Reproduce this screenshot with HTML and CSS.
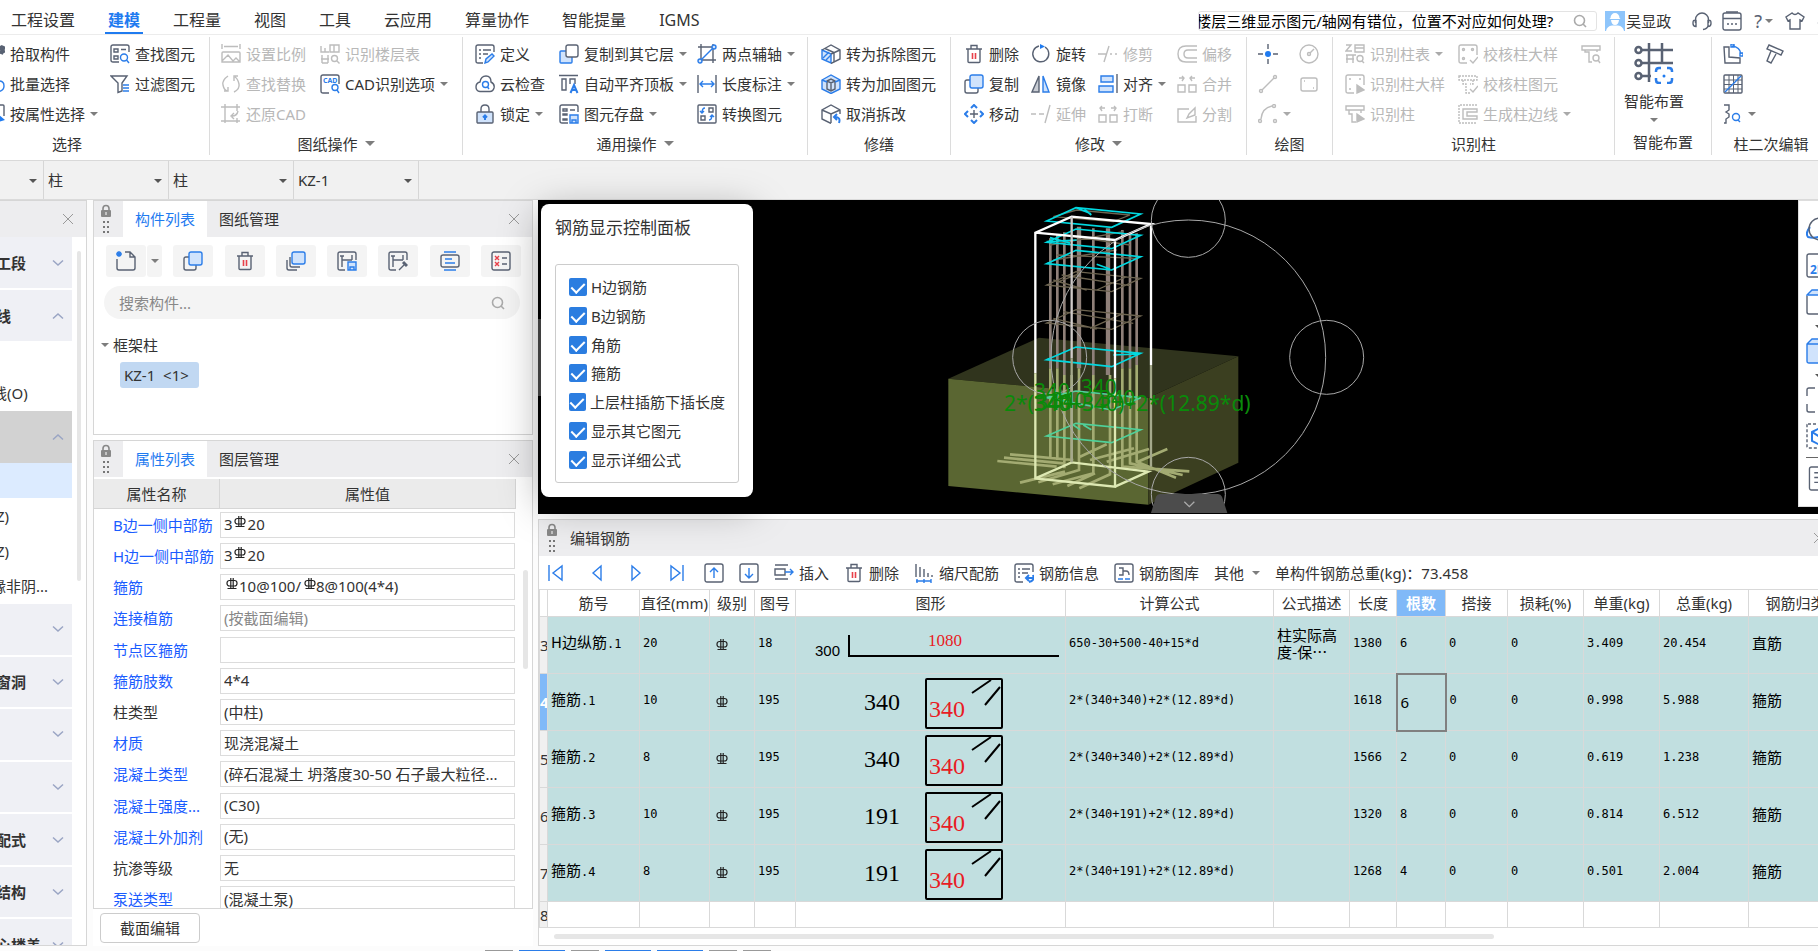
FILE: index.html
```html
<!DOCTYPE html>
<html lang="zh-CN">
<head>
    <meta charset="UTF-8">
    <title>建模</title>
    <link rel="stylesheet" href="styles.css">
</head>
<body>
    <!-- shared symbols -->
    <svg class="sprite">
        <symbol id="lock" viewBox="0 0 12 30">
            <path d="M3 7V4.500a3 3 0 0 1 6 0V7" fill="none" stroke="#888" stroke-width="1.600"/>
            <rect x="1" y="6" width="10" height="7" rx="1" fill="#888"/>
            <path d="M6 8v3" stroke="#fff"/>
            <path d="M3 17h2v2H3zM7 17h2v2H7zM3 22h2v2H3zM7 22h2v2H7zM3 27h2v2H3zM7 27h2v2H7z" fill="#777"/>
        </symbol>
        <symbol id="cross" viewBox="0 0 12 12"><path d="M1 1l10 10M11 1L1 11"/></symbol>
        <symbol id="down" viewBox="0 0 12 12"><path d="M1 3.500l5 4.500 5-4.500"/></symbol>
        <symbol id="up" viewBox="0 0 12 12"><path d="M1 8.500L6 4l5 4.500"/></symbol>
        <symbol id="lens" viewBox="0 0 14 14"><circle cx="6.500" cy="6.500" r="5"/><path d="M10 10l3 3"/></symbol>
        <symbol id="trash" viewBox="0 0 20 20">
            <path d="M2 5h16M7 5V1.500h6V5M4 5v12.500q0 1 1 1h10q1 0 1-1V5"/>
            <path d="M8.500 9v6M11.500 9v6" stroke="#e8404a" stroke-width="1.600"/>
        </symbol>
        <symbol id="rebar" viewBox="0 0 12 12">
            <rect x="1" y="2.500" width="10" height="5.500" rx="2.500"/>
            <path d="M4.800 0v10.500M7.200 0v10.500M1.500 10.500h9"/>
        </symbol>
        <symbol id="stirrup" viewBox="0 0 140 57">
            <rect x="62" y="5" width="76" height="49" rx="1"/>
            <path d="M108 19l19-13M121 31l15-18"/>
        </symbol>
    </svg>

    <header class="menubar">
        <nav class="menu">
            <a href="#">工程设置</a>
            <a href="#" class="active">建模</a>
            <a href="#">工程量</a>
            <a href="#">视图</a>
            <a href="#">工具</a>
            <a href="#">云应用</a>
            <a href="#">算量协作</a>
            <a href="#">智能提量</a>
            <a href="#">IGMS</a>
        </nav>
        <div class="account">
            <div class="help-search">
                <input type="text" aria-label="搜索" value="楼层三维显示图元/轴网有错位，位置不对应如何处理?">
                <svg class="lens"><use href="#lens"/></svg>
            </div>
            <svg class="avatar" viewBox="0 0 20 20">
                <rect width="20" height="20" fill="#8ec5fb"/>
                <path d="M5.500 7a4.500 5 0 0 1 9 0l1 1H4.500zM6 9h8q-.5 5-4 5t-4-5zM1 20q1-5 6-5.500h6q5 .5 6 5.500z" fill="#fff"/>
            </svg>
            <span class="user">吴显政</span>
            <svg class="ic headset" viewBox="0 0 20 20"><path d="M3.500 12V8.500a6.500 6.500 0 0 1 13 0V12M4 9.500H2q-1 0-1 3t3 3zM16 9.500h2q1 0 1 3t-3 3zM16 15q-1 3-5 3.500"/></svg>
            <svg class="ic" viewBox="0 0 20 20"><rect x="1" y="2" width="18" height="17" rx="2"/><path d="M1 7.500h18M4 1h12M5 13h2M9 13h2M13 13h2"/></svg>
            <button class="help">?<i class="caret"></i></button>
            <svg class="ic shirt" viewBox="0 0 20 20"><path d="M7 2L1 6l2 4 2-1v9h10V9l2 1 2-4-6-4q-3 3-6 0z"/></svg>
            <svg class="ic tiny"><use href="#up"/></svg>
        </div>
    </header>

    <section class="ribbon">
        <div class="group g-select">
            <div class="tools">
                <button><svg class="ic" viewBox="0 0 20 20"><path d="M15 2l4 7M19 2l-3 8" stroke-width="4"/></svg>拾取构件</button>
                <button><svg class="ic" viewBox="0 0 20 20"><path d="M9 18H3q-2 0-2-2V3q0-2 2-2h14q2 0 2 2v5M4 5h4v3H4zM11 5.500h5M4 12h4v3H4z"/><g class="b"><circle cx="14" cy="13.500" r="3.500"/><path d="M16.500 16l2.500 3"/></g></svg>查找图元</button>
                <button><svg class="ic b" viewBox="0 0 20 20"><path d="M14 3v8M14 7q5 0 5 5t-7 6"/></svg>批量选择</button>
                <button><svg class="ic" viewBox="0 0 20 20"><path d="M1 2h16l-5 7v8l-4 1.500V9z"/><path class="b" d="M13 11h6M13 14h6M13 17h6"/></svg>过滤图元</button>
                <button><svg class="ic" viewBox="0 0 20 20"><path d="M14 1h4q1 0 1 1v10"/><path class="bf" d="M13 10l7 6-7 2z"/></svg>按属性选择<i class="caret"></i></button>
            </div>
            <div class="group-name">选择</div>
        </div>

        <div class="group g-drawing">
            <div class="tools">
                <button disabled><svg class="ic" viewBox="0 0 20 20"><path d="M1 0v5M19 0v5M3 2.500h14M1 18V9q0-1 1-1h16q1 0 1 1v9zM1 17l6-6 5 6 3-3 4 4"/></svg>设置比例</button>
                <button disabled><svg class="ic" viewBox="0 0 20 20"><path d="M1 2v6h8M5 8V4M10 1h9v7h-9zM14 1v7M2 11v8M8 11v8M1 15h8M2 19h6"/><circle cx="14.500" cy="14.500" r="3"/><path d="M17 17l2.500 2.500"/></svg>识别楼层表</button>
                <button disabled><svg class="ic" viewBox="0 0 20 20"><path d="M7 2Q1 6 2 11t4 6M3 17h4v-4M13 18q6-3 5-8t-4-7M17 2h-4v5"/></svg>查找替换</button>
                <button><svg class="ic" viewBox="0 0 20 20"><path d="M9 19H3q-2 0-2-2V3q0-2 2-2h14q2 0 2 2v7"/><text class="cad" x="3" y="9">CAD</text><g class="b"><circle cx="15" cy="13.500" r="3"/><path d="M17 16l2 3"/></g></svg>CAD识别选项<i class="caret"></i></button>
                <button disabled><svg class="ic" viewBox="0 0 20 20"><path d="M4 0v19M0 3h19M16 0v7M0 17h19M16 14v5M17 7q-1 5-6 5M13 9l-3 3 3 3"/></svg>还原CAD</button>
            </div>
            <div class="group-name">图纸操作<i class="caret big"></i></div>
        </div>

        <div class="group g-common">
            <div class="tools">
                <button><svg class="ic" viewBox="0 0 20 20"><path d="M8 19H3q-2 0-2-2V3q0-2 2-2h14q2 0 2 2v5M4 6h2M8 6h8M4 10h2M8 10h5M4 14h2"/><path class="bl" d="M10 19l1-4 6-5 2 2-6 6z"/></svg>定义</button>
                <button><svg class="ic" viewBox="0 0 20 20"><rect class="bl" x="1" y="7" width="12" height="12" rx="1"/><rect x="7" y="1" width="12" height="12" rx="2" fill="#fff"/></svg>复制到其它层<i class="caret"></i></button>
                <button><svg class="ic" viewBox="0 0 20 20"><path d="M4 0v19M16 0v19M1 3h18M1 16h18"/><path class="b" d="M2 18L18 2"/><circle class="bl" cx="3" cy="17" r="2"/><circle class="bl" cx="17" cy="3" r="2"/></svg>两点辅轴<i class="caret"></i></button>
                <button><svg class="ic" viewBox="0 0 20 20"><path d="M5 17.500Q1 17 1 13t4-5q1-6 6-6t5 6q4 2 3 6-1 3.500-4 3.500z"/><g class="b"><circle cx="10.500" cy="10.500" r="3"/><path d="M12.500 13l1.500 2"/></g></svg>云检查</button>
                <button><svg class="ic" viewBox="0 0 20 20"><path d="M0 1.500h19M3 5h4v11H3zM11 10V5h5v5"/><path class="b" d="M11.500 19l3.500-8 3.500 8M13 16h4" stroke-width="2"/></svg>自动平齐顶板<i class="caret"></i></button>
                <button><svg class="ic" viewBox="0 0 20 20"><path d="M1 1v18M19 1v18"/><path class="b" d="M3 10h14M6 7l-3 3 3 3M14 7l3 3-3 3"/></svg>长度标注<i class="caret"></i></button>
                <button><svg class="ic" viewBox="0 0 20 20"><path d="M6 8V5q0-4 4-4t4 4v3"/><rect x="2" y="8" width="16" height="11" rx="1" fill="#d0e3fc"/><path class="b" d="M10 16v-4M8 13.500l2-2 2 2" stroke-width="2"/></svg>锁定<i class="caret"></i></button>
                <button><svg class="ic" viewBox="0 0 20 20"><path d="M9 19H3q-2 0-2-2V3q0-2 2-2h14q2 0 2 2v5M4 5h4v2H4zM11 6h5M4 10h4v1H4zM4 15h4v1H4z"/><path class="bl" d="M11 11h8v8h-8zM13 19v-3h4v3"/></svg>图元存盘<i class="caret"></i></button>
                <button><svg class="ic" viewBox="0 0 20 20"><rect x="1" y="1" width="18" height="18" rx="1"/><path d="M12 4h4v4h-4zM4 12h4v4H4z"/><path class="b" d="M8 4Q5 4 5 9M3 7l2 2 2-2M12 16q3 0 3-5M13 13l2-2 2 2"/></svg>转换图元</button>
            </div>
            <div class="group-name">通用操作<i class="caret big"></i></div>
        </div>

        <div class="group g-repair">
            <div class="tools">
                <button><svg class="ic" viewBox="0 0 20 20"><path class="bl" d="M1 6l9 4v9l-9-4z"/><path d="M1 6l9-5 9 5v9l-9 4.500M10 10l9-4M4 4.500l9 4v9"/><path class="b" d="M2 14l6-6M5 16l5-5"/></svg>转为拆除图元</button>
                <button><svg class="ic" viewBox="0 0 20 20"><path class="bl" d="M1 6l9-5 9 5v9l-9 4.500L1 15z"/><path d="M6 7l4-2 4 2v8l-4 2-4-2zM6 7l4 2 4-2M10 9v8"/><path class="b" d="M1 6l5 2M19 6l-5 2"/></svg>转为加固图元</button>
                <button><svg class="ic" viewBox="0 0 20 20"><path d="M10 19.500L1 15V6l9-5 9 5v4M1 6l9 4 9-4M10 10v9"/><path class="b" d="M18 19q2-6-4-6M16 10l-3 3 3 3" stroke-width="2"/></svg>取消拆改</button>
            </div>
            <div class="group-name">修缮</div>
        </div>

        <div class="group g-modify">
            <div class="tools">
                <button><svg class="ic"><use href="#trash"/></svg>删除</button>
                <button><svg class="ic" viewBox="0 0 20 20"><path d="M14 3a8 8 0 1 1-6-1"/><path class="bf" d="M9 0l5 2.500L9 5z"/></svg>旋转</button>
                <button disabled><svg class="ic" viewBox="0 0 20 20"><path d="M0 10h9M11 2L6 18M12 10h2M17 10h2"/></svg>修剪</button>
                <button disabled><svg class="ic" viewBox="0 0 20 20"><path d="M20 2H9Q1 2 1 10t8 8h11M20 6h-9q-4 0-4 4t4 4h9"/></svg>偏移</button>
                <button><svg class="ic" viewBox="0 0 20 20"><path d="M6 6H3q-2 0-2 2v9q0 2 2 2h9q2 0 2-2v-3"/><rect class="bl" x="6" y="1" width="13" height="13" rx="2"/></svg>复制</button>
                <button><svg class="ic" viewBox="0 0 20 20"><path d="M8 2v16H1z" fill="#c9cdd4"/><path class="bl" d="M12 2v16h6z"/></svg>镜像</button>
                <button><svg class="ic" viewBox="0 0 20 20"><path d="M19 0v19"/><path class="bl" d="M3 2h12v6H3zM1 12h14v6H1z"/></svg>对齐<i class="caret"></i></button>
                <button disabled><svg class="ic" viewBox="0 0 20 20"><path d="M1 11h7v7H1zM12 11h7v7h-7zM2 4h5M5 2l2 2-2 3M18 4h-5M15 2l-2 2 2 3"/></svg>合并</button>
                <button><svg class="ic" viewBox="0 0 20 20"><path d="M10 6v8M6 10h8"/><path class="b" d="M7 4l3-3 3 3M7 16l3 3 3-3M4 7l-3 3 3 3M16 7l3 3-3 3" stroke-width="2"/></svg>移动</button>
                <button disabled><svg class="ic" viewBox="0 0 20 20"><path d="M0 10h5M8 10h5M19 1l-5 18"/></svg>延伸</button>
                <button disabled><svg class="ic" viewBox="0 0 20 20"><path d="M1 11h7v7H1zM12 11h7v7h-7zM7 4H2M4 2L2 4l2 3M13 4h5M16 2l2 2-2 3"/></svg>打断</button>
                <button disabled><svg class="ic" viewBox="0 0 20 20"><path d="M12 5H1v13h18v-6M10 14l2-4 6-6v7z"/></svg>分割</button>
            </div>
            <div class="group-name">修改<i class="caret big"></i></div>
        </div>

        <div class="group g-draw">
            <div class="tools">
                <button aria-label="点"><svg class="ic" viewBox="0 0 20 20"><path d="M10 0v5M10 15v5M0 10h5M15 10h5"/><circle class="bf" cx="10" cy="10" r="3"/></svg></button>
                <button disabled aria-label="圆"><svg class="ic" viewBox="0 0 20 20"><circle cx="10" cy="10" r="9"/><circle cx="10" cy="10" r="1.500"/><path d="M11 9l4-4"/></svg></button>
                <button disabled aria-label="直线"><svg class="ic" viewBox="0 0 20 20"><circle cx="3" cy="17" r="1.500"/><circle cx="17" cy="3" r="1.500"/><path d="M4 16L16 4"/></svg></button>
                <button disabled aria-label="矩形"><svg class="ic" viewBox="0 0 20 20"><rect x="2" y="4" width="16" height="13" rx="2"/><path d="M5 7h1M14 14h1"/></svg></button>
                <button disabled aria-label="弧"><svg class="ic" viewBox="0 0 20 20"><circle cx="2" cy="17" r="1.500"/><circle cx="16" cy="2" r="1.500"/><circle cx="17" cy="17" r="1.500"/><path d="M3 15Q4 4 14 2"/></svg><i class="caret"></i></button>
            </div>
            <div class="group-name">绘图</div>
        </div>

        <div class="group g-identify">
            <div class="tools">
                <button disabled><svg class="ic" viewBox="0 0 20 20"><path d="M1 1h5L1 7h6M10 1h9v7h-9zM2 11v8M8 11v8M1 15h8M1 11h10M10 4h9"/><circle cx="15" cy="14.500" r="3"/><path d="M17 17l2 2"/></svg>识别柱表<i class="caret"></i></button>
                <button disabled><svg class="ic" viewBox="0 0 20 20"><path d="M9 19H3q-2 0-2-2V3q0-2 2-2h14q2 0 2 2v8M12 16l3 3 5-6"/><circle cx="5.500" cy="5.500" r="1"/><circle cx="14.500" cy="5.500" r="1"/><circle cx="5.500" cy="14.500" r="1"/></svg>校核柱大样</button>
                <button disabled aria-label="校核"><svg class="ic" viewBox="0 0 20 20"><path d="M1 2h18v4H1zM4 6v2h4v10h3M16 6v2"/><circle cx="15" cy="14" r="3"/><path d="M17 16l2 3"/></svg></button>
                <button disabled><svg class="ic" viewBox="0 0 20 20"><path d="M9 19H3q-2 0-2-2V3q0-2 2-2h14q2 0 2 2v8M4 5h2M14 5h2M4 15h2"/><path d="M12 11v8l7-3z" fill="#bdbdbd"/></svg>识别柱大样</button>
                <button disabled class="wide"><svg class="ic" viewBox="0 0 20 20"><path d="M1 2h18v4H1zM5 6v4h3v9h4M15 6v4h-3" stroke-dasharray="2 1"/><path d="M12 15l3 3 5-6"/></svg>校核柱图元</button>
                <button disabled><svg class="ic" viewBox="0 0 20 20"><path d="M1 2h18v4H1zM4 6v4h3v8h4M16 6v3"/><path d="M12 10v8l7-3z" fill="#bdbdbd"/></svg>识别柱</button>
                <button disabled class="wide"><svg class="ic" viewBox="0 0 20 20"><path d="M19 1H1v18h18" stroke-dasharray="2 1"/><path d="M19 5H5v10h14v-3H9V8h10z"/></svg>生成柱边线<i class="caret"></i></button>
            </div>
            <div class="group-name">识别柱</div>
        </div>

        <div class="group g-smart">
            <button class="big-tool">
                <svg class="ic" viewBox="0 0 40 42"><g stroke-width="2.500"><path d="M8 8h31M8 21h31M8 34h9M15 1v39M28 1v19"/><circle cx="4.500" cy="8" r="3"/><circle cx="4.500" cy="21" r="3"/><circle cx="4.500" cy="34" r="3"/><path class="b" d="M22 30v-1q0-3 3-3h2M33 26h2q3 0 3 3v1M38 36v2q0 3-3 3h-2M27 41h-2q-3 0-3-3v-2"/></g><circle class="bf" cx="30" cy="34" r="1.500"/></svg>
                <span>智能布置</span>
                <i class="caret"></i>
            </button>
            <div class="group-name">智能布置</div>
        </div>

        <div class="group g-edit">
            <div class="tools">
                <button aria-label="编辑"><svg class="ic" viewBox="0 0 20 20"><path d="M1 3h5v10l11 1v5H2z"/><path class="b" d="M9 2q8 1 9 8M8 0h3v3H8zM17 9h3v3h-3z"/></svg></button>
                <button aria-label="柱帽"><svg class="ic" viewBox="0 0 20 20"><path d="M4 1l14 6-2 4L2 5zM6 7L2 17l4 2 5-9"/></svg></button>
                <button aria-label="网格"><svg class="ic" viewBox="0 0 20 20"><path d="M1 6h18M1 10.500h18M1 15h18M6 1v18M10.500 1v18M15 1v18" stroke-width="1"/><rect x="1" y="1" width="18" height="18" rx="1"/><path class="b" d="M2 18L18 2"/></svg></button>
                <span></span>
                <button aria-label="查询"><svg class="ic" viewBox="0 0 20 20"><path d="M1 1h5v5L3 8l3 2v3L3 15v4H1"/><g class="b"><circle cx="13" cy="13" r="3.500"/><path d="M15 16l2 2"/></g></svg><i class="caret"></i></button>
            </div>
            <div class="group-name">柱二次编辑</div>
        </div>
    </section>

    <section class="combos">
        <div class="combo first"><select aria-label="楼层"><option></option></select></div>
        <div class="combo"><select aria-label="构件类别"><option>柱</option></select></div>
        <div class="combo"><select aria-label="构件类型"><option>柱</option></select></div>
        <div class="combo"><select aria-label="构件"><option>KZ-1</option></select></div>
    </section>

    <main class="main">
        <aside class="sidenav">
            <div class="bar"><button class="close" aria-label="关闭"><svg><use href="#cross"/></svg></button></div>
            <div class="sidenav-body">
                <div class="list">
                    <div class="head">工段<svg><use href="#down"/></svg></div>
                    <div class="head">线<svg><use href="#up"/></svg></div>
                    <div class="entry tall">线(O)</div>
                    <div class="head current"><svg><use href="#up"/></svg></div>
                    <div class="entry selected"></div>
                    <div class="entry">Z)</div>
                    <div class="entry">Z)</div>
                    <div class="entry shift">缘非阴...</div>
                    <div class="rest">
                        <div class="head"><svg><use href="#down"/></svg></div>
                        <div class="head">窗洞<svg><use href="#down"/></svg></div>
                        <div class="head"><svg><use href="#down"/></svg></div>
                        <div class="head"><svg><use href="#down"/></svg></div>
                        <div class="head">配式<svg><use href="#down"/></svg></div>
                        <div class="head">结构<svg><use href="#down"/></svg></div>
                        <div class="head">心楼盖<svg><use href="#down"/></svg></div>
                    </div>
                </div>
                <div class="thumb"></div>
            </div>
        </aside>

        <div class="dock">
            <section class="panel components">
                <div class="bar">
                    <svg class="lock"><use href="#lock"/></svg>
                    <button class="tab active">构件列表</button>
                    <button class="tab">图纸管理</button>
                    <button class="close" aria-label="关闭"><svg><use href="#cross"/></svg></button>
                </div>
                <div class="actions">
                    <div class="split">
                        <button aria-label="新建"><svg class="ic" viewBox="0 0 20 20"><path d="M1 8v9q0 2 2 2h14q2 0 2-2V6l-5-5H9M14 1v5h5"/><path class="b" d="M3 0v6M0 3h6M1 1l4 4M5 1L1 5"/></svg></button>
                        <button aria-label="更多"><i class="caret"></i></button>
                    </div>
                    <button aria-label="复制"><svg class="ic" viewBox="0 0 20 20"><path d="M6 6H3q-2 0-2 2v9q0 2 2 2h8q2 0 2-2v-3"/><rect class="bl" x="6" y="1" width="13" height="13" rx="2"/></svg></button>
                    <button aria-label="删除"><svg class="ic"><use href="#trash"/></svg></button>
                    <button aria-label="层间复制"><svg class="ic" viewBox="0 0 20 20"><path d="M4 6v8q0 2 2 2h8M1 9v8q0 2 2 2h8"/><rect class="bl" x="6" y="1" width="13" height="12" rx="2"/></svg></button>
                    <button aria-label="构件存盘"><svg class="ic" viewBox="0 0 20 20"><path d="M8 19H3q-2 0-2-2V3q0-2 2-2h14q2 0 2 2v6M5 16V5M5 9h10M15 4v5M3 5h4"/><path class="bl" d="M11 11h8v8h-8zM13 19v-3h4v3"/></svg></button>
                    <button aria-label="构件提取"><svg class="ic" viewBox="0 0 20 20"><path d="M8 19H3q-2 0-2-2V3q0-2 2-2h14q2 0 2 2v6M5 16V5M5 9h10M15 4v5M3 5h4M11 19l6-6"/><path d="M15 11l4 4" stroke-width="3"/></svg></button>
                    <button aria-label="排列"><svg class="ic" viewBox="0 0 20 20"><rect x="1" y="4" width="18" height="12" rx="2"/><path class="b" d="M4 1h12M4 19h12M5 8h7M5 12h10"/></svg></button>
                    <button aria-label="检查"><svg class="ic" viewBox="0 0 20 20"><rect x="1" y="1" width="18" height="18" rx="2"/><path d="M11 7h5M11 13h5"/><path d="M4 5l4 4M8 5L4 9M4 11l4 4M8 11l-4 4" stroke="#e8404a"/></svg></button>
                </div>
                <div class="find">
                    <input type="text" aria-label="搜索构件" placeholder="搜索构件...">
                    <svg class="lens"><use href="#lens"/></svg>
                </div>
                <div class="tree">
                    <div class="node"><i class="caret"></i>框架柱</div>
                    <div class="leaf">KZ-1 &nbsp;&lt;1&gt;</div>
                </div>
            </section>

            <section class="panel properties">
                <div class="bar">
                    <svg class="lock"><use href="#lock"/></svg>
                    <button class="tab active">属性列表</button>
                    <button class="tab">图层管理</button>
                    <button class="close" aria-label="关闭"><svg><use href="#cross"/></svg></button>
                </div>
                <div class="prop-head"><span>属性名称</span><span>属性值</span></div>
                <div class="prop-clip">
                    <div class="props">
                        <div class="prop"><label for="p1">B边一侧中部筋</label><input id="p1" value="3&emsp;20"><svg class="rebar after-digit"><use href="#rebar"/></svg></div>
                        <div class="prop"><label for="p2">H边一侧中部筋</label><input id="p2" value="3&emsp;20"><svg class="rebar after-digit"><use href="#rebar"/></svg></div>
                        <div class="prop"><label for="p3">箍筋</label><input id="p3" value="&emsp;10@100/&emsp;8@100(4*4)"><svg class="rebar at-start"><use href="#rebar"/></svg><svg class="rebar after-slash"><use href="#rebar"/></svg></div>
                        <div class="prop"><label for="p4">连接植筋</label><input id="p4" class="muted" value="(按截面编辑)"></div>
                        <div class="prop"><label for="p5">节点区箍筋</label><input id="p5"></div>
                        <div class="prop"><label for="p6">箍筋肢数</label><input id="p6" value="4*4"></div>
                        <div class="prop plain"><label for="p7">柱类型</label><input id="p7" value="(中柱)"></div>
                        <div class="prop"><label for="p8">材质</label><input id="p8" value="现浇混凝土"></div>
                        <div class="prop"><label for="p9">混凝土类型</label><input id="p9" value="(碎石混凝土 坍落度30-50 石子最大粒径..."></div>
                        <div class="prop"><label for="p10">混凝土强度...</label><input id="p10" value="(C30)"></div>
                        <div class="prop"><label for="p11">混凝土外加剂</label><input id="p11" value="(无)"></div>
                        <div class="prop plain"><label for="p12">抗渗等级</label><input id="p12" value="无"></div>
                        <div class="prop"><label for="p13">泵送类型</label><input id="p13" value="(混凝土泵)"></div>
                    </div>
                    <div class="thumb"></div>
                </div>
            </section>
            <button class="section-edit">截面编辑</button>
        </div>

        <div class="workspace">
            <section class="viewport">
                <svg class="scene" viewBox="-1176 15 3840 939">
                    <!-- footing -->
                    <path d="M55 551L327 428 925 484 655 608z" fill="#30341d"/>
                    <path d="M55 551L655 608V929L55 873z" fill="#5a6632"/>
                    <path d="M655 608L925 484V803L655 929z" fill="#3b3f20"/>
                    <!-- main bars -->
                    <g fill="none" stroke="#8f8079" stroke-width="8">
                        <path d="M361 130V520M382 120V520M403 112V540M490 100V540M577 105V520M600 115V520M620 115V510"/>
                        <path d="M534 100V540M447 95V520" stroke-width="13"/>
                    </g>
                    <g fill="none" stroke="#a3ab72" stroke-width="8">
                        <path d="M361 520V790M382 520V795M403 540V820M425 540V800M447 520V825L325 862M490 540V835L368 868M540 540V838L448 880M577 520V815L778 829M600 520V805L758 840M620 510V800L738 848M405 830L270 863M495 835L412 873M240 778L430 795M222 788L400 805M202 798L380 815M450 785L530 748M480 795L612 760M530 800L657 762M620 802L712 762"/>
                    </g>
                    <!-- stirrups -->
                    <g fill="none" stroke="#6d6450" stroke-width="4">
                        <path d="M350 270L438 230 632 250 545 290zM370 255L470 285M395 240L600 272M380 262L450 235M500 285L590 245M350 384L438 344 632 363 545 403zM370 370L500 402M400 350L610 385M480 400L580 355M370 65L440 45 600 60 550 80zM380 180L620 190M370 195L560 165M360 150L580 110M400 120L600 150"/>
                    </g>
                    <g fill="none" stroke="#00d8e0" stroke-width="5">
                        <path d="M350 78L438 38 632 57 545 97zM438 38l45 18M462 42l22 18"/>
                        <path d="M350 142L438 102 632 121 545 161zM350 140l90-5M360 128l60 16"/>
                        <path d="M350 206L438 166 632 185 545 225zM500 208l40 14"/>
                        <path d="M350 494L438 456 632 475 545 515zM550 480l75-3"/>
                    </g>
                    <g fill="none" stroke="#4fd19a" stroke-width="5">
                        <path d="M350 608L438 588 632 608 545 645zM350 723L438 685 632 704 545 743zM430 690l20 14M460 690l24 14"/>
                    </g>
                    <!-- column outline -->
                    <g fill="none" stroke="#fff" stroke-width="7">
                        <path d="M316 535V113L425 65 663 87 555 135 316 113M555 550V135M663 510V87"/>
                        <path d="M425 490V65" stroke="#cfcac8"/>
                        <path d="M316 535V850L555 875V550M316 850L425 802 655 830 555 875" stroke="#dde8b2"/>
                        <path d="M663 510V815M425 490V802" stroke="#a5a98c"/>
                    </g>
                    <!-- orbit rings -->
                    <g fill="none" stroke="#a8a8a8" stroke-width="3">
                        <circle cx="775" cy="487" r="412"/>
                        <circle cx="775" cy="76" r="111"/>
                        <circle cx="359" cy="487" r="111"/>
                        <circle cx="1190" cy="487" r="111"/>
                        <circle cx="775" cy="898" r="111"/>
                    </g>
                    <g class="formula">
                        <text x="222" y="648">2*(340+340)+2*(12.89*d)</text>
                        <text x="312" y="612">340</text>
                        <text x="452" y="600">340</text>
                        <text x="318" y="644">340</text>
                        <text x="362" y="638">340</text>
                        <text x="508" y="632">340</text>
                    </g>
                    <path d="M662 957L678 905Q682 897 690 897H864Q872 897 876 905L893 957z" fill="#4c4c4c"/>
                    <path d="M763 920l15 15 15-15" fill="none" stroke="#aaa" stroke-width="4"/>
                </svg>
                <div class="grip"></div>

                <div class="rebar-panel">
                    <h2>钢筋显示控制面板</h2>
                    <div class="checks">
                        <label><input type="checkbox" checked>H边钢筋</label>
                        <label><input type="checkbox" checked>B边钢筋</label>
                        <label><input type="checkbox" checked>角筋</label>
                        <label><input type="checkbox" checked>箍筋</label>
                        <label><input type="checkbox" checked>上层柱插筋下插长度</label>
                        <label><input type="checkbox" checked>显示其它图元</label>
                        <label><input type="checkbox" checked>显示详细公式</label>
                    </div>
                </div>

                <div class="view-tools">
                    <svg class="ic globe" viewBox="0 0 26 26"><path class="b" d="M4 10Q-1 16 2 20q10 3 22-6" stroke-width="2"/><circle cx="14" cy="12" r="11"/></svg>
                    <svg class="ic" viewBox="0 0 26 26"><rect x="1" y="1" width="24" height="23" rx="2"/><text class="two-d" x="4" y="21">2D</text></svg>
                    <svg class="ic" viewBox="0 0 26 26"><path d="M1 7v16q0 2 2 2h16V7"/><path class="bl" d="M1 6l5-5h19l-6 5z"/></svg>
                    <i class="caret dark"></i>
                    <svg class="ic" viewBox="0 0 26 26"><path class="bl" d="M1 6l5-5h19v18l-6 6H3q-2 0-2-2zM1 6h18v19"/></svg>
                    <i class="caret dark"></i>
                    <svg class="ic" viewBox="0 0 26 26"><path d="M1 9V3q0-2 2-2h6M1 17v6q0 2 2 2h6M17 1h8v8M17 25h8v-8"/></svg>
                    <svg class="ic gap" viewBox="0 0 26 26"><rect x="1" y="1" width="24" height="24" rx="1" stroke-dasharray="3 2"/><path class="b" d="M6 9l8-4 8 4v9l-8 4-8-4zM6 9l8 5 8-5M14 14v8" stroke-width="2"/></svg>
                    <svg class="ic last" viewBox="0 0 26 26"><rect x="1" y="1" width="24" height="24" rx="2"/><path d="M6 7h4M12 7h8M6 12h4M12 12h8M6 17h4"/></svg>
                </div>
            </section>

            <section class="editor">
                <div class="bar">
                    <svg class="lock"><use href="#lock"/></svg>
                    <span class="title">编辑钢筋</span>
                    <button class="close edge" aria-label="关闭"><svg><use href="#cross"/></svg></button>
                </div>
                <div class="edit-tools">
                    <div class="steps">
                        <button aria-label="首行"><svg class="ic b" viewBox="0 0 20 20"><path d="M2 2v16M15 3v14l-9-7z"/></svg></button>
                        <button aria-label="上一行"><svg class="ic b" viewBox="0 0 20 20"><path d="M14 3v14l-8-7z"/></svg></button>
                        <button aria-label="下一行"><svg class="ic b" viewBox="0 0 20 20"><path d="M5 3v14l8-7z"/></svg></button>
                        <button aria-label="末行"><svg class="ic b" viewBox="0 0 20 20"><path d="M16 2v16M4 3v14l9-7z"/></svg></button>
                    </div>
                    <button aria-label="上移"><svg class="ic" viewBox="0 0 20 20"><rect x="1" y="1" width="18" height="18" rx="2"/><path class="b" d="M10 15V5M6 9l4-4 4 4"/></svg></button>
                    <button aria-label="下移"><svg class="ic" viewBox="0 0 20 20"><rect x="1" y="1" width="18" height="18" rx="2"/><path class="b" d="M10 5v10M6 11l4 4 4-4"/></svg></button>
                    <button><svg class="ic" viewBox="0 0 20 20"><path d="M1 2h13M1 16h13M1 6h10v6H1z"/><path class="b" d="M11 9h8M16 6l3 3-3 3"/></svg>插入</button>
                    <button><svg class="ic"><use href="#trash"/></svg>删除</button>
                    <button><svg class="ic" viewBox="0 0 20 20"><path d="M2 1v13M6 4v10M10 6v8M14 10v4M18 12v2"/><path class="b" d="M2 18h15M3 16v4M10 16v4M17 16v4"/></svg>缩尺配筋</button>
                    <button><svg class="ic" viewBox="0 0 20 20"><path d="M9 19H3q-2 0-2-2V3q0-2 2-2h14q2 0 2 2v6M4 6h2M8 6h8M4 10h2M8 10h6M4 14h2"/><path class="b" d="M12 15h7M15 12l-3 3 3 3M19 12q2 6-4 7" stroke-width="2"/></svg>钢筋信息</button>
                    <button><svg class="ic" viewBox="0 0 20 20"><rect x="1" y="1" width="18" height="18" rx="2"/><path d="M5 5h4v7H5M9 8h3q3 0 3 4"/><path class="b" d="M4 16h5M11 16h5"/></svg>钢筋图库</button>
                    <button class="other">其他<i class="caret"></i></button>
                    <span class="total">单构件钢筋总重(kg)：73.458</span>
                </div>
                <div class="sheet">
                    <table>
                        <colgroup>
                            <col class="w-no"><col class="w-name"><col class="w-dia"><col class="w-grade"><col class="w-fig"><col class="w-shape"><col class="w-calc"><col class="w-desc"><col class="w-len"><col class="w-count"><col class="w-lap"><col class="w-loss"><col class="w-unit"><col class="w-sum"><col class="w-kind">
                        </colgroup>
                        <thead>
                            <tr><th></th><th>筋号</th><th>直径(mm)</th><th>级别</th><th>图号</th><th>图形</th><th>计算公式</th><th>公式描述</th><th>长度</th><th class="hot">根数</th><th>搭接</th><th>损耗(%)</th><th>单重(kg)</th><th>总重(kg)</th><th>钢筋归类</th></tr>
                        </thead>
                        <tbody>
                            <tr>
                                <th>3</th><td class="han">H边纵筋<span>.1</span></td><td>20</td><td class="grade"><svg class="rebar"><use href="#rebar"/></svg></td><td>18</td>
                                <td class="shape"><svg class="figure" viewBox="0 0 269 56"><path d="M53 18v21h210"/><text class="small" x="19" y="39">300</text><text class="mid" x="132" y="29">1080</text></svg></td>
                                <td>650-30+500-40+15*d</td><td class="han desc">柱实际高度-保…</td><td>1380</td><td>6</td><td>0</td><td>0</td><td>3.409</td><td>20.454</td><td class="han">直筋</td>
                            </tr>
                            <tr>
                                <th class="hot">4</th><td class="han">箍筋<span>.1</span></td><td>10</td><td class="grade"><svg class="rebar"><use href="#rebar"/></svg></td><td>195</td>
                                <td class="shape"><svg class="figure" viewBox="0 0 269 56"><use href="#stirrup" x="68" width="140" height="57"/><text x="68" y="36">340</text><text class="red" x="133" y="43">340</text></svg></td>
                                <td>2*(340+340)+2*(12.89*d)</td><td></td><td>1618</td><td class="focus">6</td><td>0</td><td>0</td><td>0.998</td><td>5.988</td><td class="han">箍筋</td>
                            </tr>
                            <tr>
                                <th>5</th><td class="han">箍筋<span>.2</span></td><td>8</td><td class="grade"><svg class="rebar"><use href="#rebar"/></svg></td><td>195</td>
                                <td class="shape"><svg class="figure" viewBox="0 0 269 56"><use href="#stirrup" x="68" width="140" height="57"/><text x="68" y="36">340</text><text class="red" x="133" y="43">340</text></svg></td>
                                <td>2*(340+340)+2*(12.89*d)</td><td></td><td>1566</td><td>2</td><td>0</td><td>0</td><td>0.619</td><td>1.238</td><td class="han">箍筋</td>
                            </tr>
                            <tr>
                                <th>6</th><td class="han">箍筋<span>.3</span></td><td>10</td><td class="grade"><svg class="rebar"><use href="#rebar"/></svg></td><td>195</td>
                                <td class="shape"><svg class="figure" viewBox="0 0 269 56"><use href="#stirrup" x="68" width="140" height="57"/><text x="68" y="36">191</text><text class="red" x="133" y="43">340</text></svg></td>
                                <td>2*(340+191)+2*(12.89*d)</td><td></td><td>1320</td><td>8</td><td>0</td><td>0</td><td>0.814</td><td>6.512</td><td class="han">箍筋</td>
                            </tr>
                            <tr>
                                <th>7</th><td class="han">箍筋<span>.4</span></td><td>8</td><td class="grade"><svg class="rebar"><use href="#rebar"/></svg></td><td>195</td>
                                <td class="shape"><svg class="figure" viewBox="0 0 269 56"><use href="#stirrup" x="68" width="140" height="57"/><text x="68" y="36">191</text><text class="red" x="133" y="43">340</text></svg></td>
                                <td>2*(340+191)+2*(12.89*d)</td><td></td><td>1268</td><td>4</td><td>0</td><td>0</td><td>0.501</td><td>2.004</td><td class="han">箍筋</td>
                            </tr>
                            <tr class="blank"><th>8</th><td></td><td></td><td></td><td></td><td></td><td></td><td></td><td></td><td></td><td></td><td></td><td></td><td></td><td></td></tr>
                        </tbody>
                    </table>
                </div>
                <div class="hscroll"><div></div></div>
            </section>
        </div>
    </main>
    <footer class="strip"><i></i><i class="on"></i><i></i><i class="on"></i><i class="on"></i><i></i><i></i></footer>
</body>
</html>
```

FILE: styles.css
```css
* {
    box-sizing: border-box;
}
body {
    margin: 0;
    height: 100vh;
    overflow: hidden;
    display: flex;
    flex-direction: column;
    font-family: "Noto Sans", "Noto Sans CJK SC", sans-serif;
    font-size: 15px;
    line-height: 20px;
    color: #333;
    background: #fcfcfc;
}
button, input, select {
    font: inherit;
    color: inherit;
    border: none;
    background: none;
    padding: 0;
    margin: 0;
    outline: none;
}
button {
    white-space: nowrap;
}
svg {
    flex: none;
}
.sprite {
    position: absolute;
    width: 0;
    height: 0;
}

/* icons */
.ic {
    width: 20px;
    height: 20px;
    fill: none;
    stroke: #596273;
    stroke-width: 1.4;
}
.ic .b, .ic.b {
    stroke: #2b7de9;
}
.ic .bl {
    stroke: #2b7de9;
    fill: #d0e3fc;
}
.ic .bf {
    stroke: none;
    fill: #1f7bf0;
}
.caret {
    border: 4px solid transparent;
    border-top: 4px solid #7d7d7d;
    border-bottom: none;
    flex: none;
}
.caret.big {
    border-width: 5px 5px 0;
}
.caret.dark {
    border-top-color: #555;
}
.lens {
    width: 14px;
    height: 14px;
    fill: none;
    stroke: #aaa;
    stroke-width: 1.6;
}
.cad, .two-d {
    font-size: 7px;
    font-weight: bold;
    fill: #2b7de9;
    stroke: none;
}
.two-d {
    font-size: 12px;
}

/* menu */
.menubar {
    height: 35px;
    flex: none;
    display: flex;
    justify-content: space-between;
    background: #fff;
    border-bottom: 1px solid #ececec;
}
.menu {
    display: flex;
    gap: 27px;
    padding-left: 8px;
}
.menu a {
    height: 34px;
    padding: 9px 3px 0;
    font-size: 16px;
    line-height: 22px;
    color: #333;
    text-decoration: none;
    white-space: nowrap;
}
.menu a.active {
    color: #1f7bf0;
    font-weight: bold;
    border-bottom: 2px solid #1f7bf0;
}
.account {
    display: flex;
    align-items: center;
    padding-top: 8px;
    margin-right: -11px;
}
.help-search {
    width: 399px;
    height: 20px;
    display: flex;
    align-items: center;
    border: 1px solid #e3e3e3;
    border-radius: 3px;
    padding-right: 9px;
    margin-right: 8px;
}
.help-search input {
    flex: 1;
    min-width: 0;
    height: 18px;
    color: #000;
    text-indent: -3px;
}
.avatar {
    width: 20px;
    height: 20px;
    margin-right: 1px;
}
.headset {
    margin: 0 10px 0 21px;
}
.help {
    display: flex;
    align-items: center;
    gap: 3px;
    margin: 0 12px;
    font-size: 18px;
    color: #596273;
}
.ic.tiny {
    width: 12px;
    height: 12px;
    margin-left: 12px;
}

/* ribbon */
.ribbon {
    height: 126px;
    flex: none;
    display: flex;
    background: #fff;
    border-bottom: 1px solid #d9d9d9;
    overflow: hidden;
}
.group {
    flex: none;
    display: flex;
    flex-direction: column;
    margin: 2px 0 5px;
    padding-top: 2px;
    border-right: 1px solid #dcdcdc;
}
.tools {
    display: grid;
    grid-auto-rows: 30px;
    align-items: center;
}
.tools button {
    display: flex;
    align-items: center;
    gap: 5px;
}
.tools button:disabled {
    color: #b8b8b8;
}
.tools button:disabled .ic {
    stroke: #bdbdbd;
}
.tools button:disabled .caret {
    border-top-color: #aaa;
}
.group-name {
    display: flex;
    justify-content: center;
    align-items: center;
    gap: 7px;
    height: 29px;
    padding-top: 3px;
}
.g-select {
    width: 285px;
    margin-left: -75px;
}
.g-select .tools {
    padding-left: 60px;
    grid-template-columns: 125px auto;
}
.g-drawing {
    width: 253px;
}
.g-drawing .tools {
    padding-left: 11px;
    grid-template-columns: 99px auto;
}
.g-common {
    width: 345px;
}
.g-common .tools {
    padding-left: 12px;
    grid-template-columns: 84px 138px auto;
}
.g-repair {
    width: 143px;
}
.g-repair .tools {
    padding-left: 13px;
}
.g-modify {
    width: 296px;
}
.g-modify .tools {
    padding-left: 13px;
    grid-template-columns: 67px 67px 79px auto;
}
.g-draw {
    width: 86px;
}
.g-draw .tools {
    padding-left: 11px;
    grid-template-columns: 41px auto;
}
.g-identify {
    width: 282px;
}
.g-identify .tools {
    padding-left: 12px;
    grid-template-columns: 113px 123px auto;
}
.g-identify .wide {
    grid-column: 2 / 4;
}
.g-smart {
    width: 97px;
}
.g-edit {
    width: 118px;
    border-right: none;
}
.g-edit .tools {
    padding-left: 11px;
    grid-template-columns: 42px auto;
}
.big-tool {
    height: 90px;
    display: flex;
    flex-direction: column;
    align-items: center;
    padding-top: 3px;
    margin-right: 20px;
    margin-left: 2px;
    gap: 7px;
}
.big-tool .ic {
    width: 40px;
    height: 42px;
}

/* component selectors */
.combos {
    height: 39px;
    flex: none;
    display: flex;
    background: #f1f1f1;
    border-bottom: 1px solid #dadada;
}
.combo {
    position: relative;
    width: 125px;
    border-right: 1px solid #d6d6d6;
}
.combo.first {
    width: 44px;
}
.combo select {
    appearance: none;
    width: 100%;
    height: 100%;
    padding-left: 4px;
}
.combo::after {
    content: "";
    position: absolute;
    right: 6px;
    top: 18px;
    border: 4px solid transparent;
    border-top-color: #555;
    border-bottom: none;
}

/* docked panels */
.main {
    flex: 1;
    min-height: 0;
    display: flex;
}
.bar {
    height: 36px;
    flex: none;
    display: flex;
    align-items: center;
    background: #ededef;
}
.lock {
    width: 12px;
    height: 30px;
    margin: 0 11px 0 6px;
}
.tab {
    height: 36px;
    padding: 0 12px;
}
.tab.active {
    background: #fff;
    color: #1f7bf0;
}
.close {
    width: 12px;
    height: 12px;
    margin: 0 12px 0 auto;
}
.close svg {
    display: block;
    width: 12px;
    height: 12px;
    fill: none;
    stroke: #999;
}
.close.edge {
    margin-right: -7px;
}
.sidenav {
    width: 87px;
    flex: none;
    display: flex;
    flex-direction: column;
    border: 1px solid #d6d6d6;
    border-width: 1px 1px 1px 0;
    background: #fff;
    overflow: hidden;
}
.sidenav-body {
    flex: 1;
    min-height: 0;
    display: flex;
    gap: 5px;
}
.list {
    width: 72px;
}
.list .head, .entry {
    display: flex;
    align-items: center;
    justify-content: space-between;
    text-indent: -4px;
    white-space: nowrap;
}
.list .head {
    height: 53px;
    padding-right: 8px;
    border-bottom: 2px solid #fff;
    background: #eff0f5;
    font-weight: bold;
}
.list .head svg {
    width: 12px;
    height: 12px;
    margin-left: auto;
    fill: none;
    stroke: #9aa5c4;
    stroke-width: 1.5;
}
.list .current {
    height: 52px;
    background: #d2d2d2;
    border-bottom: none;
}
.entry {
    height: 35px;
}
.entry.tall {
    height: 68px;
    padding-top: 32px;
    text-indent: -8px;
}
.entry.shift {
    height: 36px;
    text-indent: -9px;
}
.entry.selected {
    background: #dcebff;
}
.rest {
    height: 368px;
    display: flex;
    flex-direction: column;
}
.rest .head {
    flex: 1;
}
.sidenav .thumb {
    width: 4px;
    height: 330px;
    margin-top: 14px;
    border-radius: 2px;
    background: #e6e6e6;
}
.dock {
    width: 440px;
    flex: none;
    display: flex;
    flex-direction: column;
    margin: 0 5px 0 6px;
    background: #fff;
}
.panel {
    border: 1px solid #d6d6d6;
    background: #fff;
}
.components {
    height: 235px;
    flex: none;
    margin-bottom: 5px;
}
.actions {
    display: flex;
    justify-content: space-between;
    padding: 8px 11px 0 12px;
}
.actions button {
    width: 40px;
    height: 32px;
    display: flex;
    align-items: center;
    justify-content: center;
    background: #f4f4f4;
    border-radius: 3px;
}
.split {
    display: flex;
    gap: 1px;
}
.split button:last-child {
    width: 15px;
}
.find {
    height: 33px;
    display: flex;
    align-items: center;
    margin: 9px 12px 0 10px;
    padding: 0 15px;
    border-radius: 17px;
    background: #f4f4f4;
}
.find input {
    flex: 1;
    min-width: 0;
}
.find input::placeholder {
    color: #888;
}
.tree {
    padding: 16px 0 0 7px;
}
.node {
    display: flex;
    align-items: center;
    gap: 4px;
}
.leaf {
    width: 79px;
    margin: 7px 0 0 19px;
    padding: 3px 4px;
    white-space: nowrap;
    background: #c1d8f2;
    border-radius: 3px;
}
.properties {
    flex: 1;
    min-height: 0;
    display: flex;
    flex-direction: column;
}
.prop-head {
    flex: none;
    display: grid;
    grid-template-columns: 126px 1fr;
    height: 30px;
    margin: 2px 16px 0 0;
    border-bottom: 1px solid #d6d6d6;
    background: #ebebeb;
    line-height: 30px;
    text-align: center;
}
.prop-head span {
    border-right: 1px solid #d6d6d6;
}
.prop-clip {
    flex: 1;
    min-height: 0;
    display: flex;
    overflow: hidden;
}
.props {
    flex: 1;
    height: 406px;
    display: flex;
    flex-direction: column;
}
.prop {
    flex: 1;
    position: relative;
    display: flex;
    align-items: center;
}
.prop label {
    width: 126px;
    padding-left: 19px;
    color: #1a5cff;
    white-space: nowrap;
}
.prop.plain label {
    color: #333;
}
.prop input {
    flex: 1;
    min-width: 0;
    height: 26px;
    padding: 0 4px 2px 3px;
    border: 1px solid #dcdcdc;
}
.prop input.muted {
    color: #888;
}
.rebar {
    width: 12px;
    height: 12px;
    fill: none;
    stroke: #222;
    stroke-width: 1.2;
}
.prop .rebar {
    position: absolute;
    top: 7px;
}
.after-digit {
    left: 140px;
}
.at-start {
    left: 132px;
}
.after-slash {
    left: 210px;
}
.prop-clip .thumb {
    width: 5px;
    height: 99px;
    margin: 61px 4px 0 8px;
    border-radius: 3px;
    background: #e6e6e6;
}
.section-edit {
    flex: none;
    width: 100px;
    height: 30px;
    margin: 4px 0 3px 7px;
    border: 1px solid #ccc;
    border-radius: 4px;
    background: #fff;
}

/* 3D view */
.workspace {
    flex: 1;
    min-width: 0;
    display: flex;
    flex-direction: column;
    background: #fff;
}
.viewport {
    position: relative;
    height: 314px;
    flex: none;
    background: #000;
}
.scene {
    display: block;
    width: 1280px;
    height: 313px;
}
.formula {
    font-size: 63px;
    fill: #0a8a0a;
}
.grip {
    position: absolute;
    left: 0;
    top: 119px;
    width: 4px;
    height: 77px;
    background: #4c4c4c;
}
.rebar-panel {
    position: absolute;
    left: 3px;
    top: 4px;
    width: 212px;
    padding: 14px;
    border-radius: 8px;
    background: #fff;
    box-shadow: 0 8px 40px rgba(0, 0, 0, 0.35);
}
.rebar-panel h2 {
    margin: 0 0 26px;
    font-size: 17px;
    font-weight: normal;
    line-height: 20px;
}
.checks {
    height: 219px;
    display: flex;
    flex-direction: column;
    justify-content: space-between;
    padding: 13px;
    border: 1px solid #ccc;
    border-radius: 3px;
}
.checks label {
    height: 18px;
    display: flex;
    align-items: center;
    gap: 4px;
    white-space: nowrap;
}
.checks input {
    appearance: none;
    width: 18px;
    height: 18px;
    border-radius: 2px;
    background: #2b7de0;
    display: flex;
    justify-content: center;
}
.checks input:checked::after {
    content: "";
    width: 6px;
    height: 11px;
    margin-top: 2px;
    border: solid #fff;
    border-width: 0 2px 2px 0;
    transform: rotate(45deg);
}
.view-tools {
    position: absolute;
    right: 0;
    top: 0;
    width: 20px;
    height: 307px;
    display: flex;
    flex-direction: column;
    padding: 16px 0 0 7px;
    border: 1px solid #ddd;
    border-right: none;
    background: #fff;
    overflow: hidden;
}
.view-tools .ic {
    width: 26px;
    height: 26px;
    margin-bottom: 10px;
}
.view-tools .caret {
    margin: 0 0 9px 9px;
}
.view-tools .gap {
    margin-bottom: 8px;
}
.view-tools .last {
    width: 30px;
    height: 34px;
    padding-top: 8px;
    border-top: 1px solid #666;
}

/* rebar editor */
.editor {
    flex: 1;
    min-height: 0;
    margin-top: 5px;
    display: flex;
    flex-direction: column;
    border: 1px solid #d6d6d6;
    border-right: none;
    overflow: hidden;
}
.editor .lock {
    margin-left: 7px;
    margin-right: 12px;
}
.edit-tools {
    flex: none;
    height: 33px;
    display: flex;
    align-items: center;
    gap: 15px;
    padding-left: 8px;
}
.edit-tools button {
    display: flex;
    align-items: center;
    gap: 5px;
}
.steps {
    display: flex;
    gap: 20px;
    margin-right: 2px;
}
.edit-tools .other {
    gap: 8px;
}
.total {
    white-space: nowrap;
}
.sheet {
    overflow: hidden;
}
table {
    width: 1303px;
    table-layout: fixed;
    border-collapse: collapse;
}
.w-no { width: 8px; }
.w-name { width: 92px; }
.w-dia { width: 70px; }
.w-grade { width: 45px; }
.w-fig { width: 41px; }
.w-shape { width: 270px; }
.w-calc { width: 208px; }
.w-desc { width: 76px; }
.w-len { width: 47px; }
.w-count { width: 49px; }
.w-lap { width: 62px; }
.w-loss { width: 76px; }
.w-unit { width: 76px; }
.w-sum { width: 89px; }
.w-kind { width: 94px; }
th, td {
    padding: 0;
    border: 1px solid #d9d9d9;
    white-space: nowrap;
    overflow: hidden;
}
thead th {
    height: 27px;
    font-weight: normal;
    background: #fff;
}
tbody tr {
    height: 57px;
}
tbody th {
    font-weight: normal;
    background: #f0f0f0;
}
tbody td {
    padding: 0 0 4px 3px;
    font-family: "DejaVu Sans Mono", monospace;
    font-size: 12px;
    color: #000;
    background: #c1dfe0;
}
th.hot {
    background: #80b9f8;
    color: #fff;
    font-weight: bold;
}
td.han {
    font-family: "Noto Sans CJK SC", sans-serif;
    font-size: 15px;
}
td.han span {
    font-family: "DejaVu Sans Mono", monospace;
    font-size: 12px;
}
td.desc {
    white-space: normal;
    line-height: 17px;
}
td.grade {
    padding: 0 0 0 6px;
}
td.shape {
    padding: 0;
}
td.focus {
    border: 2px solid #808080;
    padding-bottom: 0;
    font-family: inherit;
    font-size: 15px;
}
.grade svg, .figure {
    display: block;
}
.figure {
    width: 269px;
    height: 56px;
    fill: none;
    stroke: #000;
    stroke-width: 2;
}
.figure text {
    font-family: "Liberation Serif", serif;
    font-size: 24px;
    fill: #000;
    stroke: none;
}
.figure .red, .figure .mid {
    fill: #e81c24;
}
.figure .mid {
    font-size: 17px;
}
.figure .small {
    font-family: "Liberation Sans", sans-serif;
    font-size: 15px;
}
.blank, .blank td {
    height: 26px;
    background: #fff;
}
.hscroll {
    flex: 1;
    padding: 6px 0 0 15px;
}
.hscroll div {
    width: 940px;
    height: 5px;
    border-radius: 3px;
    background: #e6e6e6;
}

/* bottom strip */
.strip {
    height: 5px;
    flex: none;
    display: flex;
    align-items: flex-end;
    gap: 6px;
    padding-left: 485px;
}
.strip i {
    width: 28px;
    height: 1px;
    background: #999;
}
.strip .on {
    width: 46px;
    background: #2b7de9;
}
```
